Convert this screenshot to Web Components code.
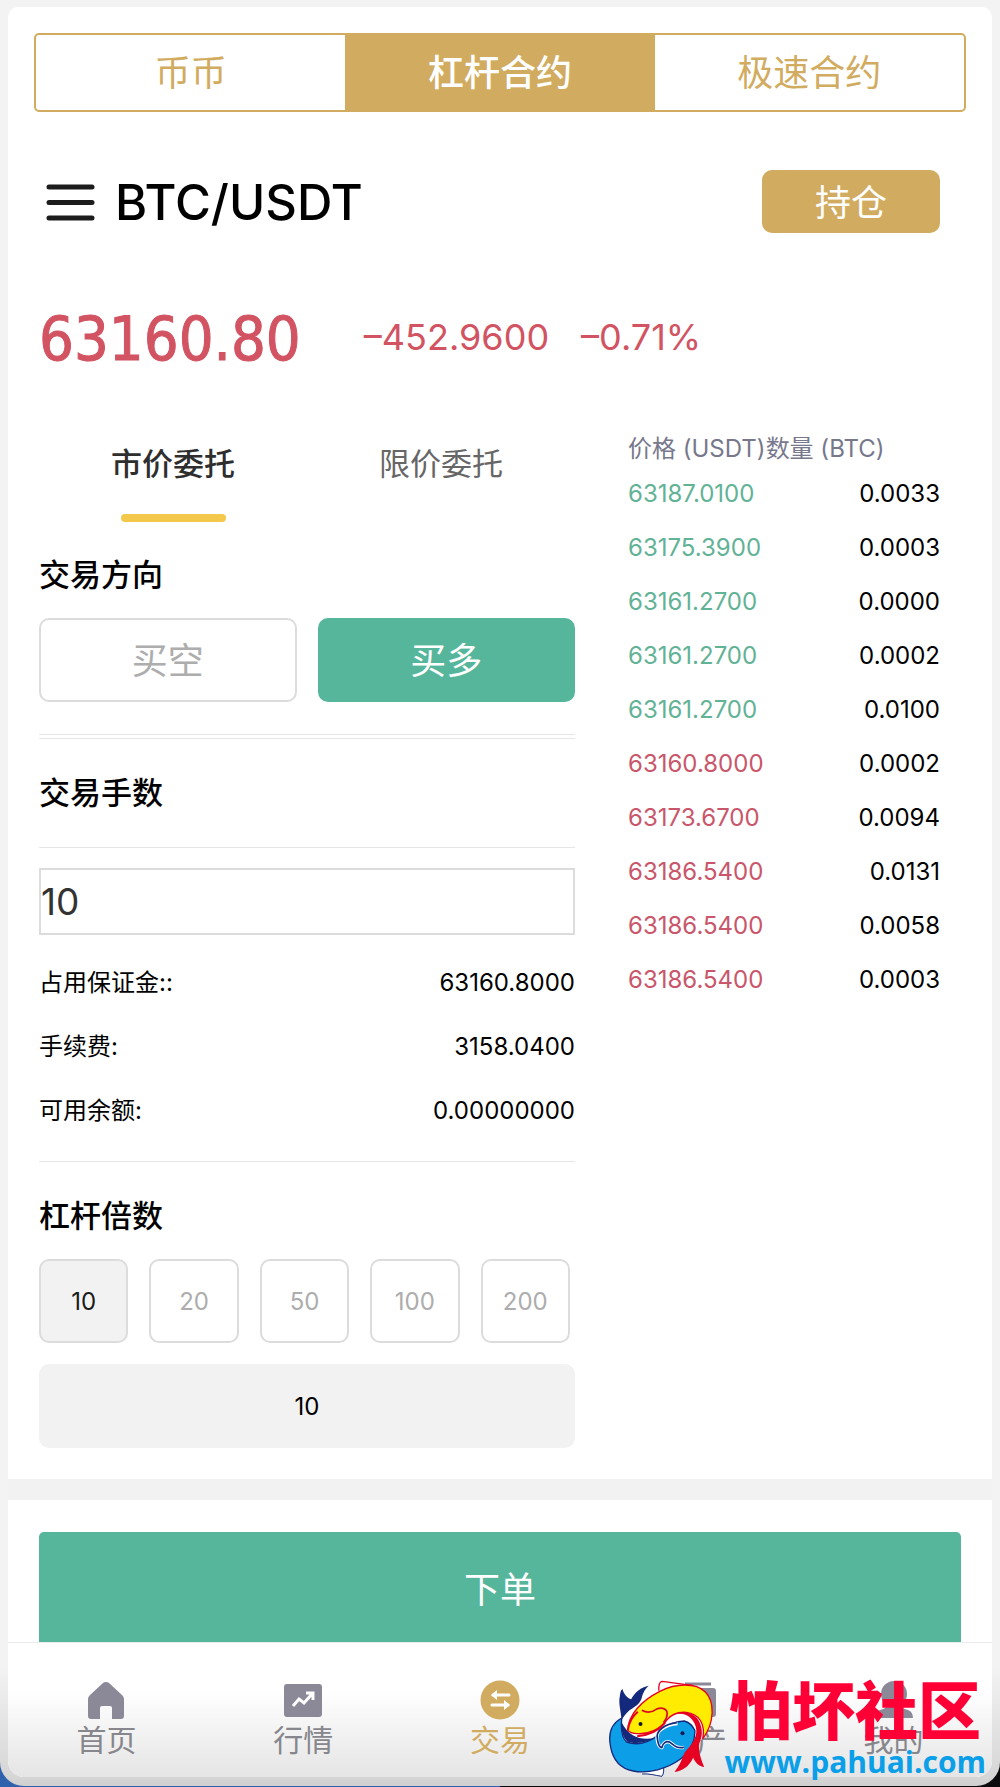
<!DOCTYPE html>
<html lang="zh-CN">
<head>
<meta charset="utf-8">
<meta name="viewport" content="width=device-width, initial-scale=1">
<title>BTC/USDT</title>
<style>
    :root {
        --gold: #d1ac60;
        --green: #56b69b;
        --red: #d25362;
        --line: #e6e6e6;
        --outline: #dcdcdc;
        --muted: #adadad;
        --fill: #f2f2f2;
        --icon: #8b8998;
    }
    body {
        margin: 0;
        font-family: Inter, "Noto Sans CJK SC", sans-serif;
        font-size: 24px;
        color: #000;
        background: linear-gradient(90deg, #2f62ad 50%, #0b0b0d 50%);
    }
</style>
</head>
<body>
<app-shell>
    <segment-tabs items="币币,杠杆合约,极速合约" active="1"></segment-tabs>
    <pair-header pair="BTC/USDT">持仓</pair-header>
    <price-ticker price="63160.80" change="–452.9600" percent="–0.71%"></price-ticker>
    <trade-layout>
        <order-form></order-form>
        <order-book slot="side"></order-book>
    </trade-layout>
    <submit-bar>下单</submit-bar>
    <bottom-nav slot="nav"></bottom-nav>
    <site-mark slot="mark"></site-mark>
</app-shell>

<script>
const reset = `
    *, *::before, *::after { box-sizing: border-box; }
    button, input { font: inherit; color: inherit; margin: 0; padding: 0; border: 0; background: none; border-radius: 0; }
    button { cursor: pointer; }
`;

class BaseElement extends HTMLElement {
    connectedCallback() {
        if (this.shadowRoot) return;
        this.attachShadow({ mode: 'open' });
        this.shadowRoot.innerHTML = `<style>${reset}</style>${this.render()}`;
        this.ready();
    }

    ready() {}
}

class AppShell extends BaseElement {
    render() {
        return `
            <style>
                :host {
                    display: block;
                    position: relative;
                    padding: 7px 8px 9px;
                    border-radius: 0 0 24px 24px;
                    background: linear-gradient(0deg, #cfcfcf, #d6d6d6 10px, #f3f3f3 120px);
                }
                .card {
                    border-radius: 10px 10px 16px 16px;
                    background: #fff;
                    overflow: hidden;
                }
            </style>
            <div class="card">
                <main><slot></slot></main>
                <slot name="nav"></slot>
            </div>
            <slot name="mark"></slot>
        `;
    }
}

class SegmentTabs extends BaseElement {
    render() {
        const active = Number(this.getAttribute('active'));
        const items = this.getAttribute('items').split(',');
        return `
            <style>
                :host { display: block; padding: 26px 26px 0; }
                nav {
                    display: grid;
                    grid-template-columns: repeat(3, 1fr);
                    border: 2px solid var(--gold);
                    border-radius: 5px;
                }
                button { padding: 14px 0 13px; font-size: 36px; line-height: 48px; color: var(--gold); }
                .active { background: var(--gold); color: #fff; font-weight: 500; }
            </style>
            <nav>
                ${items.map((text, i) => `<button class="${i === active ? 'active' : ''}">${text}</button>`).join('')}
            </nav>
        `;
    }

    ready() {
        const buttons = this.shadowRoot.querySelectorAll('button');
        buttons.forEach(button => {
            button.addEventListener('click', () => {
                buttons.forEach(b => b.classList.toggle('active', b === button));
            });
        });
    }
}

class PairHeader extends BaseElement {
    render() {
        return `
            <style>
                :host { display: flex; align-items: center; padding: 58px 52px 0 36px; }
                .menu { display: flex; padding: 0; }
                h1 { margin: 0 auto 0 19px; padding-top: 2px; font-size: 49px; line-height: 60px; font-weight: 500; }
                .hold {
                    padding: 9px 53px 6px;
                    font-size: 36px;
                    line-height: 48px;
                    color: #fff;
                    background: var(--gold);
                    border-radius: 10px;
                }
            </style>
            <button class="menu" aria-label="菜单">
                <svg width="52" height="42" viewBox="0 0 52 42" stroke="#1c1c1c" stroke-width="5" stroke-linecap="round">
                    <path d="M5 6h43M5 21.500h43M5 37h43"/>
                </svg>
            </button>
            <h1>${this.getAttribute('pair')}</h1>
            <button class="hold"><slot></slot></button>
        `;
    }
}

class PriceTicker extends BaseElement {
    render() {
        return `
            <style>
                :host { display: flex; align-items: center; padding: 70px 31px 0; color: var(--red); }
                .price {
                    font: 61px/72px "DejaVu Sans Condensed", "DejaVu Sans", sans-serif;
                    -webkit-text-stroke: 1px;
                }
                .change, .percent { font-size: 36px; line-height: 68px; padding-bottom: 4px; }
                .change { margin-left: 63px; }
                .percent { margin-left: 32px; }
            </style>
            <span class="price">${this.getAttribute('price')}</span>
            <span class="change">${this.getAttribute('change')}</span>
            <span class="percent">${this.getAttribute('percent')}</span>
        `;
    }
}

class TradeLayout extends BaseElement {
    render() {
        return `
            <style>
                :host {
                    display: grid;
                    grid-template-columns: 536fr 312fr;
                    gap: 53px;
                    align-items: start;
                    padding: 59px 52px 31px 31px;
                }
            </style>
            <slot></slot>
            <slot name="side"></slot>
        `;
    }
}

class OrderForm extends BaseElement {
    render() {
        const levels = [10, 20, 50, 100, 200];
        return `
            <style>
                :host { display: block; }
                .types { display: grid; grid-template-columns: 1fr 1fr; }
                .types button {
                    display: flex;
                    flex-direction: column;
                    align-items: center;
                    gap: 32px;
                    padding-top: 12px;
                    font-size: 31px;
                    line-height: 36px;
                    color: #666;
                }
                .types button::after { content: ""; width: 105px; height: 8px; border-radius: 4px; }
                .types .active { color: #2e2e2e; font-weight: 500; }
                .types .active::after { background: #f3c84b; }
                h2 { margin: 36px 0; font-size: 31px; line-height: 36px; font-weight: 500; }
                h2.tight { margin-bottom: 25px; }
                .types + h2 { margin-top: 35px; }
                .sides { display: grid; grid-template-columns: 1fr 1fr; gap: 21px; }
                .sides button {
                    height: 84px;
                    padding-bottom: 4px;
                    border: 2px solid var(--outline);
                    border-radius: 10px;
                    font-size: 36px;
                    color: var(--muted);
                }
                .sides .long { border-color: var(--green); background: var(--green); color: #fff; }
                hr { margin: 0; border: 0; border-top: 1px solid var(--line); }
                hr.double { height: 5px; margin-top: 32px; border-bottom: 1px solid var(--line); }
                .lots {
                    display: block;
                    width: 100%;
                    height: 67px;
                    margin: 20px 0 16px;
                    border: 2px solid var(--outline);
                    font-size: 37px;
                    color: #333;
                }
                dl { margin: 0 0 18px; }
                dl div { display: flex; justify-content: space-between; line-height: 64px; }
                dd { margin: 0; }
                .levels { display: grid; grid-template-columns: repeat(5, 1fr); gap: 21px; padding-right: 5px; }
                .levels label {
                    display: grid;
                    place-items: center;
                    height: 84px;
                    border: 2px solid var(--outline);
                    border-radius: 10px;
                    color: var(--muted);
                    cursor: pointer;
                }
                .levels input { appearance: none; position: absolute; opacity: 0; }
                .levels label:has(:checked) { background: var(--fill); color: #1a1a1a; }
                .custom {
                    display: block;
                    width: 100%;
                    height: 84px;
                    margin-top: 21px;
                    border-radius: 10px;
                    text-align: center;
                    background: var(--fill);
                }
            </style>
            <div class="types">
                <button class="active">市价委托</button>
                <button>限价委托</button>
            </div>
            <h2 class="tight">交易方向</h2>
            <div class="sides">
                <button>买空</button>
                <button class="long">买多</button>
            </div>
            <hr class="double">
            <h2><label for="lots">交易手数</label></h2>
            <hr>
            <input class="lots" id="lots" inputmode="numeric" value="10">
            <dl>
                <div><dt>占用保证金::</dt><dd>63160.8000</dd></div>
                <div><dt>手续费:</dt><dd>3158.0400</dd></div>
                <div><dt>可用余额:</dt><dd>0.00000000</dd></div>
            </dl>
            <hr>
            <h2 class="tight"><label for="custom">杠杆倍数</label></h2>
            <div class="levels">
                ${levels.map((n, i) => `
                    <label><input type="radio" name="level" value="${n}" ${i === 0 ? 'checked' : ''}>${n}</label>
                `).join('')}
            </div>
            <input class="custom" id="custom" inputmode="numeric" value="10">
        `;
    }

    ready() {
        const custom = this.shadowRoot.getElementById('custom');
        this.shadowRoot.querySelector('.levels').addEventListener('change', event => {
            custom.value = event.target.value;
        });
    }
}

class OrderBook extends BaseElement {
    render() {
        const asks = [
            ['63187.0100', '0.0033'],
            ['63175.3900', '0.0003'],
            ['63161.2700', '0.0000'],
            ['63161.2700', '0.0002'],
            ['63161.2700', '0.0100']
        ];
        const bids = [
            ['63160.8000', '0.0002'],
            ['63173.6700', '0.0094'],
            ['63186.5400', '0.0131'],
            ['63186.5400', '0.0058'],
            ['63186.5400', '0.0003']
        ];
        const rows = (list, cls) => list.map(([price, amount]) => `
            <tr><td class="${cls}">${price}</td><td>${amount}</td></tr>
        `).join('');
        return `
            <style>
                :host { display: block; }
                table { width: 100%; border-collapse: collapse; white-space: nowrap; }
                th { padding: 0 0 3px; font-weight: 400; line-height: 30px; text-align: left; color: #77788c; }
                th:first-child { width: 1px; }
                td { padding: 0; line-height: 54px; text-align: right; }
                td:first-child { text-align: left; }
                .ask { color: #62b296; }
                .bid { color: #c9566a; }
            </style>
            <table>
                <thead><tr><th>价格 (USDT)</th><th>数量 (BTC)</th></tr></thead>
                <tbody>${rows(asks, 'ask')}${rows(bids, 'bid')}</tbody>
            </table>
        `;
    }
}

class SubmitBar extends BaseElement {
    render() {
        return `
            <style>
                :host { display: block; padding: 32px 31px 0; border-top: 21px solid var(--fill); }
                button {
                    display: block;
                    width: 100%;
                    height: 110px;
                    border-radius: 5px 5px 0 0;
                    font-size: 36px;
                    color: #fff;
                    background: var(--green);
                }
            </style>
            <button><slot></slot></button>
        `;
    }
}

class BottomNav extends BaseElement {
    render() {
        const items = [
            ['首页', `<path fill="currentColor" d="M20 2q2 0 3 1l13 12q2 2 2 4v17q0 3-3 3H26V28q0-2-2-2h-8q-2 0-2 2v11H5q-3 0-3-3V19q0-2 2-4L17 3q1-1 3-1z"/>`],
            ['行情', `<rect x="1" y="4" width="38" height="33" rx="3" fill="currentColor"/>
                <path d="M10 26l6-7 5 4 8-9M23 13h7v7" fill="none" stroke="#fff" stroke-width="3"/>`],
            ['交易', `<circle cx="20" cy="20" r="19.500" fill="currentColor"/>
                <path d="M29 15H13M12 25h16" stroke="#fff" stroke-width="3" stroke-linecap="round"/>
                <path d="M11 15l6-5v10zM30 25l-6-5v10z" fill="#fff"/>`],
            ['资产', `<path d="M8 4h26" stroke="currentColor" stroke-width="3"/>
                <path fill="currentColor" d="M4 8h32q3 0 3 3v23q0 3-3 3H4q-3 0-3-3V11q0-3 3-3z"/>`],
            ['我的', `<circle cx="20" cy="14" r="13" fill="currentColor"/>
                <path fill="currentColor" d="M14 25h12q2 4 8 5 5 2 5 8H1q0-6 5-8 6-1 8-5z"/>`]
        ];
        return `
            <style>
                :host { display: block; border-top: 1px solid #ececec; background: linear-gradient(#fff 35%, #e5e5e5); }
                nav { display: grid; grid-template-columns: repeat(5, 1fr); padding: 37px 0 19px; }
                a {
                    display: flex;
                    flex-direction: column;
                    align-items: center;
                    gap: 2px;
                    font-size: 30px;
                    line-height: 36px;
                    color: #86868c;
                    text-decoration: none;
                }
                svg { color: var(--icon); }
                .active, .active svg { color: var(--gold); }
            </style>
            <nav>
                ${items.map(([text, icon], i) => `
                    <a href="#" class="${i === 2 ? 'active' : ''}">
                        <svg width="40" height="40" viewBox="0 0 40 40">${icon}</svg>
                        <span>${text}</span>
                    </a>
                `).join('')}
            </nav>
        `;
    }
}

// floats over the right end of the bottom bar
class SiteMark extends BaseElement {
    render() {
        return `
            <style>
                :host {
                    position: absolute;
                    right: 14px;
                    bottom: 6px;
                    display: flex;
                    align-items: flex-start;
                    gap: 10px;
                    pointer-events: none;
                }
                .name { margin-right: 5px; font-size: 63px; line-height: 66px; font-weight: 900; color: #ff0036; }
                .url { font: 700 30px/36px "Open Sans", sans-serif; color: #0a9fe8; }
                .text { display: flex; flex-direction: column; align-items: flex-end; }
            </style>
            <svg width="107" height="100" viewBox="50 50 320 300" stroke-linejoin="round">
                <path d="M95 150C70 240 130 280 200 250L330 235 345 150 220 100z" fill="#fff"/>
                <path d="M202 88C201 72 204 62 211 60 235 62 265 69 305 72" fill="#fff" stroke="#e60021" stroke-width="4"/>
                <path d="M152 338C172 336 190 342 211 345 218 338 217 322 216 310" fill="#fff" stroke="#15297c" stroke-width="3"/>
                <path d="M90 176C89 150 80 128 85 105 86 93 88 86 93 83 97 99 108 110 119 114 130 92 148 78 172 73 157 86 154 98 150 112 143 132 123 139 114 147 101 159 96 168 90 176z" fill="#15297c"/>
                <path d="M91 170C60 186 50 218 57 255 64 295 88 322 125 329 170 338 228 322 266 294 298 270 312 235 310 207 303 192 293 183 278 179 254 180 231 189 212 204 188 240 145 256 105 242 88 226 88 196 91 170z" fill="#0c9fe8" stroke="#15297c" stroke-width="4"/>
                <path d="M90 182C88 210 94 230 113 246L103 226 108 240C125 250 165 245 190 230 150 238 112 228 90 182z" fill="#15297c"/>
                <path d="M258 187C224 190 190 208 197 234 199 252 206 258 211 259 214 244 224 239 234 242 247 250 252 262 277 258" fill="none" stroke="#fff" stroke-width="10"/>
                <path d="M256 184C224 188 190 206 198 234 200 250 206 258 211 259 214 244 224 239 234 242 247 250 252 262 277 258" fill="none" stroke="#15297c" stroke-width="5"/>
                <path d="M109 207C110 160 150 118 205 90 254 65 312 64 341 91 370 120 370 183 334 232 342 188 323 157 284 153 256 151 238 161 226 176 208 202 173 220 137 217 124 216 114 213 109 207z" fill="#ffec00" stroke="#e60021" stroke-width="4"/>
                <path d="M109 207C112 180 122 165 139 151M137 225C170 222 200 210 221 184" fill="none" stroke="#e60021" stroke-width="6"/>
                <path d="M151 147C168 156 182 153 194 144 210 137 227 141 227 157 227 168 222 177 216 184" fill="none" stroke="#d90b20" stroke-width="5"/>
                <path d="M242 161C270 145 301 152 317 171 333 193 334 220 327 236 315 260 329 295 338 317 323 315 312 305 305 289 292 316 274 328 249 332 268 309 272 289 280 273 293 257 307 244 313 222 320 199 306 171 284 161 270 155 255 157 242 161z" fill="#e60021"/>
                <circle cx="147" cy="188" r="6" fill="#111a30"/>
                <circle cx="273" cy="216" r="6" fill="#111a50"/>
            </svg>
            <div class="text">
                <span class="name">怕坏社区</span>
                <span class="url">www.pahuai.com</span>
            </div>
        `;
    }
}

customElements.define('app-shell', AppShell);
customElements.define('segment-tabs', SegmentTabs);
customElements.define('pair-header', PairHeader);
customElements.define('price-ticker', PriceTicker);
customElements.define('trade-layout', TradeLayout);
customElements.define('order-form', OrderForm);
customElements.define('order-book', OrderBook);
customElements.define('submit-bar', SubmitBar);
customElements.define('bottom-nav', BottomNav);
customElements.define('site-mark', SiteMark);
</script>
</body>
</html>
